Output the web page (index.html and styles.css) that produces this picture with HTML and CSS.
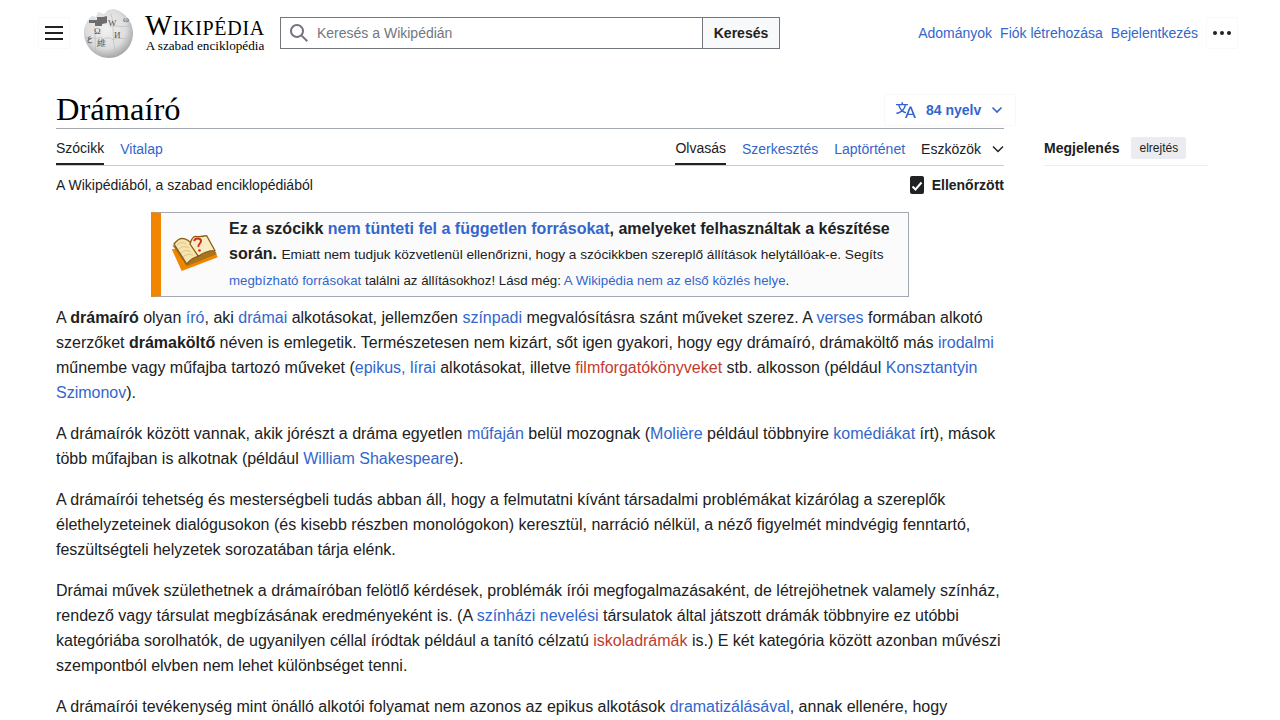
FILE: index.html
```html
<!DOCTYPE html>
<html lang="hu">
<head>
    <meta charset="UTF-8">
    <meta name="viewport" content="width=device-width, initial-scale=1.0">
    <title>Drámaíró – Wikipédia</title>
    <link rel="stylesheet" href="styles.css">
</head>
<body>

    <header class="top-bar">
        <button class="icon-btn menu-btn" aria-label="Menü">
            <svg width="20" height="20" viewBox="0 0 20 20"><path d="M1 3h18v2H1zM1 9h18v2H1zM1 15h18v2H1z" fill="#202122"/></svg>
        </button>
        <a class="logo" href="#">
            <svg class="globe" width="50" height="50" viewBox="0 0 50 50">
                <defs>
                    <radialGradient id="globeFill" cx="0.45" cy="0.4" r="0.62">
                        <stop offset="0" stop-color="#f2f2f2"/>
                        <stop offset="0.65" stop-color="#dddddd"/>
                        <stop offset="1" stop-color="#a2a2a2"/>
                    </radialGradient>
                </defs>
                <path d="M14 4 L20 6 L24 2 L30 1 C41 4 49 14 49 25 C49 39 38 50 25 50 C12 50 0 39 0 25 C0 17 4 11 8 8 L12 9 Z" fill="url(#globeFill)"/>
                <path d="M5 12 h8 v-3 h6 l4 -1 v7 l-5 1 v2 h-7 v-3 h-6 z" fill="#6e6e6e"/>
                <path d="M1 30 C7 27 11 33 16 29 C20 33 25 27 29 32 C34 28 39 33 48 29 M10 19 C13 28 9 36 13 46 M27 6 C31 18 27 34 33 47 M26 19 C32 16 39 21 47 17" fill="none" stroke="#bcbcbc" stroke-width="0.7"/>
                <text x="10" y="26" class="globe-glyph">Ω</text>
                <text x="24" y="18" class="globe-glyph">W</text>
                <text x="30" y="30" class="globe-glyph">И</text>
                <text x="13" y="38" class="globe-glyph">維</text>
                <text x="3" y="33" class="globe-glyph">ع</text>
                <text x="39" y="14" class="globe-glyph">ω</text>
            </svg>
            <span class="wordmark">
                <span class="wordmark-name">Wikipédia</span>
                <span class="wordmark-sub">A szabad enciklopédia</span>
            </span>
        </a>
        <form class="search">
            <div class="search-field">
                <svg width="20" height="20" viewBox="0 0 20 20"><path d="M12.2 13.6a7 7 0 1 1 1.4-1.4l5.4 5.4-1.4 1.4zM3 8a5 5 0 1 0 10 0A5 5 0 0 0 3 8z" fill="#72777d"/></svg>
                <span class="search-placeholder">Keresés a Wikipédián</span>
            </div>
            <button class="search-btn" type="button">Keresés</button>
        </form>
        <nav class="user-links">
            <a href="#">Adományok</a>
            <a href="#">Fiók létrehozása</a>
            <a href="#">Bejelentkezés</a>
        </nav>
        <button class="icon-btn more-btn" aria-label="Továbbiak">
            <svg width="20" height="20" viewBox="0 0 20 20"><circle cx="3" cy="10" r="2" fill="#202122"/><circle cx="10" cy="10" r="2" fill="#202122"/><circle cx="17" cy="10" r="2" fill="#202122"/></svg>
        </button>
    </header>

    <div class="page">
        <main class="content">
            <div class="title-row">
                <h1>Drámaíró</h1>
                <button class="lang-btn">
                    <svg width="20" height="20" viewBox="0 0 20 20"><path d="M20 18h-1.44a.6.6 0 0 1-.4-.12.8.8 0 0 1-.23-.31L17 15h-5l-1 2.54a.8.8 0 0 1-.22.3.6.6 0 0 1-.4.14H9l4.55-11.47h1.89zm-3.53-4.31L14.89 9.5a12 12 0 0 1-.39-1.24q-.09.37-.19.69l-.19.56-1.58 4.19zm-6.3-1.58a13.4 13.4 0 0 1-2.91-1.41 11.5 11.5 0 0 0 2.81-5.37H12V4H7.31a4 4 0 0 0-.2-.56C6.87 2.79 6.6 2 6.6 2l-1.47.5s.4.89.6 1.5H0v1.33h2.15A11.2 11.2 0 0 0 5 10.7a17.2 17.2 0 0 1-5 2.1q.56.82.87 1.38a23.3 23.3 0 0 0 5.22-2.51 15.6 15.6 0 0 0 3.56 1.77zM3.630 5.33h4.91a8.1 8.1 0 0 1-2.45 4.45 9.1 9.1 0 0 1-2.46-4.45" fill="#3366cc"/></svg>
                    <span>84 nyelv</span>
                    <svg width="12" height="12" viewBox="0 0 12 12"><path d="M1.5 3.5 6 8l4.5-4.5" fill="none" stroke="#3366cc" stroke-width="1.6"/></svg>
                </button>
            </div>

            <div class="tabs">
                <div class="tab-group">
                    <a class="tab active" href="#">Szócikk</a>
                    <a class="tab" href="#">Vitalap</a>
                </div>
                <div class="tab-group">
                    <a class="tab active" href="#">Olvasás</a>
                    <a class="tab" href="#">Szerkesztés</a>
                    <a class="tab" href="#">Laptörténet</a>
                    <span class="tab tools">Eszközök
                        <svg width="12" height="12" viewBox="0 0 12 12"><path d="M1 3.5 6 8.5l5-5" fill="none" stroke="#202122" stroke-width="1.5"/></svg>
                    </span>
                </div>
            </div>

            <div class="sub-row">
                <span>A Wikipédiából, a szabad enciklopédiából</span>
                <span class="checked">
                    <svg width="14" height="18" viewBox="0 0 14 18"><rect width="14" height="18" rx="2" fill="#202122"/><path d="M2.500 10.500 5.500 13.500 11.500 6.500" fill="none" stroke="#fff" stroke-width="2"/></svg>
                    Ellenőrzött
                </span>
            </div>

            <div class="notice">
                <svg class="notice-icon" width="50" height="40" viewBox="0 0 50 40">
                    <path d="M0.700 14 L10.700 36 L46.700 22.300 L44 16 Z" fill="#f28500"/>
                    <path d="M1.300 10 L15.700 31.300 L45.700 19 L42 13 L20 16 Z" fill="#a8741c"/>
                    <path d="M3 9 C6 5 8 3.500 10.700 3.300 C15 3.500 19 6 22 10 L27.300 21.300 C23 22 19 25 15.700 29 Z" fill="#f6e3ae" stroke="#8a5a10" stroke-width="1.300" stroke-linejoin="round"/>
                    <path d="M19 9 C20 5 22 2 24 1.300 C28 1.800 32 1.500 35.700 0.700 L44 15.700 C38 15.500 32 18 27.300 21.300 Z" fill="#f9ebc4" stroke="#8a5a10" stroke-width="1.300" stroke-linejoin="round"/>
                    <path d="M6 10 C9 7 12 7 15 9 M8 14 C11 11 14 11 18 13 M10 18 C13 15 16 15 20 17 M12 22 C15 19 18 19 22 20" fill="none" stroke="#d6bd80" stroke-width="0.800"/>
                    <path d="M23 6 C24 2.500 30 2.500 30 6 C30 9 26.500 9 27.500 12" fill="none" stroke="#d0301a" stroke-width="2"/>
                    <circle cx="28.500" cy="15.500" r="1.300" fill="#d0301a"/>
                </svg>
                <div class="notice-text">
                    <b>Ez a szócikk <a href="#">nem tünteti fel a független forrásokat</a>, amelyeket felhasználtak a készítése során.</b>
                    <small>Emiatt nem tudjuk közvetlenül ellenőrizni, hogy a szócikkben szereplő állítások helytállóak-e. Segíts</small>
                    <small class="tight"><a href="#">megbízható forrásokat</a> találni az állításokhoz! Lásd még: <a href="#">A Wikipédia nem az első közlés helye</a>.</small>
                </div>
            </div>

            <p>A <b>drámaíró</b> olyan <a href="#">író</a>, aki <a href="#">drámai</a> alkotásokat, jellemzően <a href="#">színpadi</a> megvalósításra szánt műveket szerez. A <a href="#">verses</a> formában alkotó szerzőket <b>drámaköltő</b> néven is emlegetik. Természetesen nem kizárt, sőt igen gyakori, hogy egy drámaíró, drámaköltő más <a href="#">irodalmi</a> műnembe vagy műfajba tartozó műveket (<a href="#">epikus, lírai</a> alkotásokat, illetve <a class="red" href="#">filmforgatókönyveket</a> stb. alkosson (például <a href="#">Konsztantyin Szimonov</a>).</p>
            <p>A drámaírók között vannak, akik jórészt a dráma egyetlen <a href="#">műfaján</a> belül mozognak (<a href="#">Molière</a> például többnyire <a href="#">komédiákat</a> írt), mások több műfajban is alkotnak (például <a href="#">William Shakespeare</a>).</p>
            <p>A drámaírói tehetség és mesterségbeli tudás abban áll, hogy a felmutatni kívánt társadalmi problémákat kizárólag a szereplők élethelyzeteinek dialógusokon (és kisebb részben monológokon) keresztül, narráció nélkül, a néző figyelmét mindvégig fenntartó, feszültségteli helyzetek sorozatában tárja elénk.</p>
            <p>Drámai művek születhetnek a drámaíróban felötlő kérdések, problémák írói megfogalmazásaként, de létrejöhetnek valamely színház, rendező vagy társulat megbízásának eredményeként is. (A <a href="#">színházi nevelési</a> társulatok által játszott drámák többnyire ez utóbbi kategóriába sorolhatók, de ugyanilyen céllal íródtak például a tanító célzatú <a class="red" href="#">iskoladrámák</a> is.) E két kategória között azonban művészi szempontból elvben nem lehet különbséget tenni.</p>
            <p>A drámaírói tevékenység mint önálló alkotói folyamat nem azonos az epikus alkotások <a href="#">dramatizálásával</a>, annak ellenére, hogy</p>
        </main>

        <aside class="side">
            <div class="side-head">
                <b>Megjelenés</b>
                <button class="hide-btn">elrejtés</button>
            </div>
        </aside>
    </div>

</body>
</html>
```

FILE: styles.css
```css
html, body {
    height: 720px;
    overflow: hidden;
}
body {
    margin: 0;
    font-family: "Liberation Sans", Arial, sans-serif;
    font-size: 16px;
    color: #202122;
    background-color: #fff;
}
a {
    color: #3366cc;
    text-decoration: none;
}
a.red {
    color: #bf3c2c;
}
button {
    font-family: inherit;
    cursor: pointer;
}

.top-bar {
    display: flex;
    align-items: center;
    height: 66px;
    padding: 0 42px 0 38px;
}
.icon-btn {
    width: 32px;
    height: 32px;
    padding: 0;
    display: flex;
    align-items: center;
    justify-content: center;
    background: #fff;
    border: 1px solid #f8f9fa;
    border-radius: 2px;
}
.logo {
    display: flex;
    align-items: center;
    margin-left: 14px;
    color: #000;
}
.globe {
    margin-right: 11px;
}
.globe-glyph {
    font-family: "Liberation Serif", serif;
    font-size: 9px;
    fill: #555;
}
.wordmark {
    display: flex;
    flex-direction: column;
    align-items: center;
    width: 120px;
    white-space: nowrap;
}
.wordmark-name {
    font-family: "Liberation Serif", serif;
    font-variant: small-caps;
    font-size: 28.5px;
    line-height: 26px;
    letter-spacing: 0.7px;
}
.wordmark-sub {
    font-family: "Liberation Serif", serif;
    font-size: 13.2px;
    line-height: 14px;
}
.search {
    display: flex;
    width: 500px;
    height: 32px;
    margin-left: 15px;
}
.search-field {
    flex: 1;
    display: flex;
    align-items: center;
    gap: 8px;
    padding-left: 8px;
    border: 1px solid #72777d;
    border-right: none;
    font-size: 14px;
}
.search-placeholder {
    color: #72777d;
}
.search-btn {
    width: 78px;
    border: 1px solid #72777d;
    background-color: #f8f9fa;
    color: #202122;
    font-size: 14px;
    font-weight: bold;
}
.user-links {
    display: flex;
    gap: 8px;
    margin-left: auto;
    margin-right: 8px;
    font-size: 14px;
}

.page {
    display: flex;
    gap: 40px;
    padding: 28px 0 0 56px;
}
.content {
    width: 948px;
    flex: none;
}
.title-row {
    display: flex;
    justify-content: space-between;
    align-items: flex-end;
    height: 34px;
    border-bottom: 1px solid #a2a9b1;
}
h1 {
    margin: 0 0 2px;
    font-family: "Liberation Serif", serif;
    font-weight: normal;
    font-size: 32.5px;
    line-height: 34px;
    color: #000;
}
.lang-btn {
    display: flex;
    align-items: center;
    gap: 10px;
    width: 132px;
    height: 32px;
    margin: 0 -12px 2px 0;
    padding: 0 11px;
    background: #fff;
    border: 1px solid #f8f9fa;
    border-radius: 2px;
    color: #3366cc;
    font-size: 14px;
    font-weight: bold;
}
.tabs {
    display: flex;
    justify-content: space-between;
    height: 36px;
    border-bottom: 1px solid #c8ccd1;
    font-size: 14px;
}
.tab-group {
    display: flex;
    gap: 16px;
}
.tab {
    display: flex;
    align-items: center;
    gap: 11px;
    height: 36px;
    padding-top: 4px;
    box-sizing: border-box;
}
.tab.active {
    color: #202122;
    border-bottom: 2px solid #202122;
}
.tools {
    color: #202122;
}
.sub-row {
    display: flex;
    justify-content: space-between;
    align-items: center;
    margin-top: 10px;
    font-size: 14px;
    height: 18px;
}
.checked {
    display: flex;
    align-items: center;
    gap: 8px;
    font-weight: bold;
}
.notice {
    display: flex;
    align-items: center;
    width: 758px;
    height: 85px;
    box-sizing: border-box;
    margin: 18px auto 8px;
    border: 1px solid #a2a9b1;
    border-left: 10px solid #f28500;
    background-color: #fbfbfb;
}
.notice-icon {
    flex: none;
    margin: 0 8px 0 10px;
}
.notice-text {
    font-size: 16px;
    line-height: 25px;
}
.notice-text small {
    font-size: 13.65px;
}
.notice-text small.tight {
    font-size: 13.3px;
}
p {
    margin: 0 0 16px;
    line-height: 25px;
}

.side {
    width: 164px;
    padding-top: 43px;
}
.side-head {
    display: flex;
    align-items: flex-start;
    gap: 12px;
    height: 28px;
    border-bottom: 1px solid #eaecf0;
    font-size: 14px;
    line-height: 22px;
}
.hide-btn {
    height: 22px;
    padding: 0 8px;
    border: none;
    border-radius: 2px;
    background-color: #eaecf0;
    color: #202122;
    font-size: 12px;
}
```
